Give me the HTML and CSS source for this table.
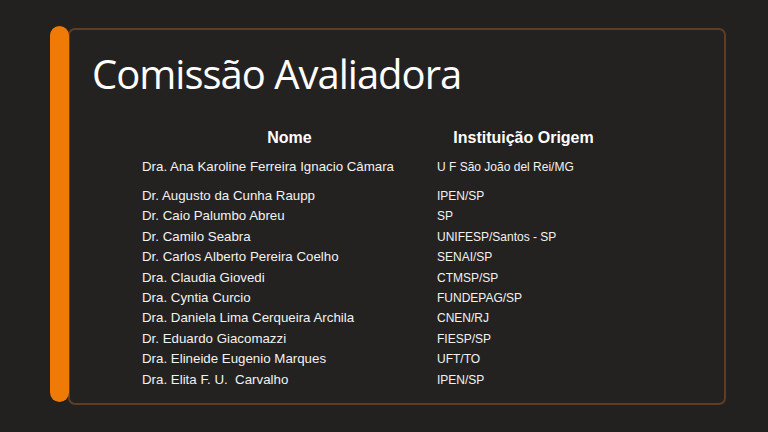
FILE: index.html
```html
<!DOCTYPE html>
<html lang="pt">
<head>
<meta charset="utf-8">
<title>Comissão Avaliadora</title>
<link rel="stylesheet" href="styles.css">
</head>
<body>
<div class="slide">
  <div class="accent"></div>
  <section class="panel">
    <h1 class="title">Comissão Avaliadora</h1>
    <div class="table">
      <div class="th">Nome</div>
      <div class="th">Instituição Origem</div>

      <div class="name first">Dra. Ana Karoline Ferreira Ignacio Câmara</div>
      <div class="inst first">U F São João del Rei/MG</div>

      <div class="name">Dr. Augusto da Cunha Raupp</div>
      <div class="inst">IPEN/SP</div>

      <div class="name">Dr. Caio Palumbo Abreu</div>
      <div class="inst">SP</div>

      <div class="name">Dr. Camilo Seabra</div>
      <div class="inst">UNIFESP/Santos - SP</div>

      <div class="name">Dr. Carlos Alberto Pereira Coelho</div>
      <div class="inst">SENAI/SP</div>

      <div class="name">Dra. Claudia Giovedi</div>
      <div class="inst">CTMSP/SP</div>

      <div class="name">Dra. Cyntia Curcio</div>
      <div class="inst">FUNDEPAG/SP</div>

      <div class="name">Dra. Daniela Lima Cerqueira Archila</div>
      <div class="inst">CNEN/RJ</div>

      <div class="name">Dr. Eduardo Giacomazzi</div>
      <div class="inst">FIESP/SP</div>

      <div class="name">Dra. Elineide Eugenio Marques</div>
      <div class="inst">UFT/TO</div>

      <div class="name">Dra. Elita F. U.&nbsp; Carvalho</div>
      <div class="inst">IPEN/SP</div>
    </div>
  </section>
</div>
</body>
</html>
```

FILE: styles.css
```css
html, body {
  margin: 0;
  padding: 0;
  background: #232120;
  width: 768px;
  height: 432px;
  overflow: hidden;
}

.slide {
  display: flex;
  align-items: flex-start;
  padding: 26px 0 0 50px;
}

.accent {
  width: 19px;
  height: 376px;
  background: #f07a06;
  border-radius: 10px;
  margin-right: -1px;
  position: relative;
  z-index: 1;
}

.panel {
  margin-top: 2px;
  width: 654px;
  height: 373px;
  border: 2px solid #5e3d22;
  border-radius: 7px;
  background: #242221;
  box-sizing: content-box;
}

.title {
  margin: 20px 0 0 22px;
  font-family: "Open Sans", sans-serif;
  font-weight: 400;
  font-size: 40px;
  line-height: 48px;
  color: #ffffff;
  letter-spacing: -1px;
}

.table {
  display: grid;
  grid-template-columns: 295px 173px;
  margin: 28px 0 0 72px;
  font-family: "Liberation Sans", Arial, sans-serif;
  color: #f2f2f2;
}

.th {
  font-weight: 700;
  font-size: 16px;
  line-height: 24px;
  text-align: center;
  color: #ffffff;
  margin-bottom: 7px;
}

.name {
  font-size: 13.3px;
  line-height: 20.4px;
}

.inst {
  font-size: 12px;
  line-height: 20.4px;
}

.first {
  margin-bottom: 8.5px;
}
```
